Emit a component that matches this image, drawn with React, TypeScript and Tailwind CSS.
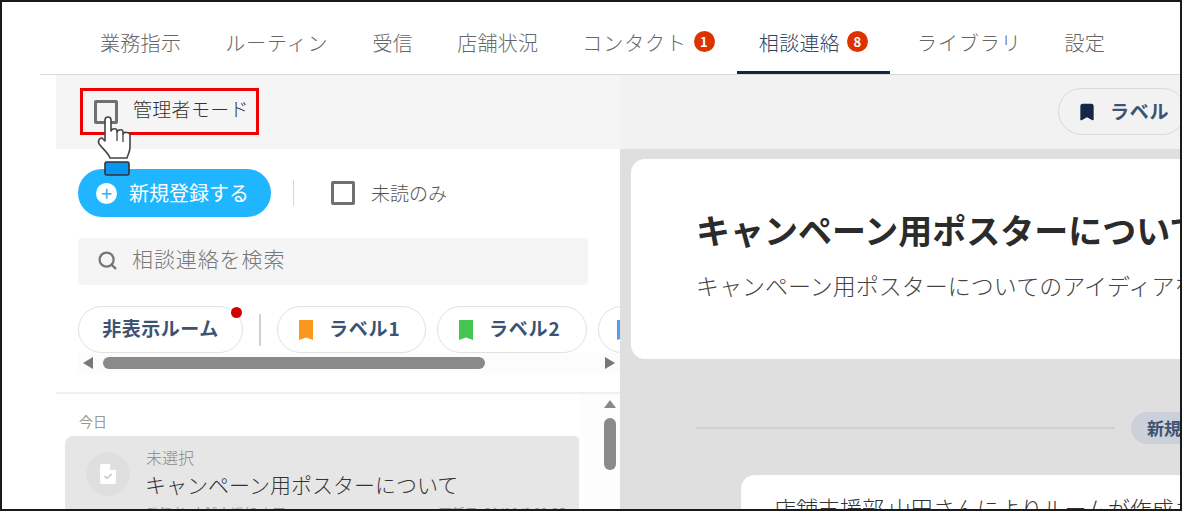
import { Bookmark, Search } from 'lucide-react'

const font = "font-['Noto_Sans_CJK_JP','Noto_Sans',sans-serif]"

function Tab({ label, badge, active, kana }: { label: string; badge?: string; active?: boolean; kana?: boolean }) {
  return (
    <div className={`h-full px-[22px] flex items-center gap-[7px] text-[20px] font-light pt-[12px] ${kana ? 'tracking-[0.9px]' : 'tracking-[0.3px]'} ${active ? 'text-[#2f435f] border-b-[3px] border-[#142746]' : 'text-[#666666] pb-[3px]'}`}>
      <span>{label}</span>
      {badge && (
        <span className="w-[21px] h-[21px] -mt-[2px] rounded-full bg-[#dc3300] text-white text-[13px] font-bold flex items-center justify-center leading-none">
          {badge}
        </span>
      )}
    </div>
  )
}

function LabelChip({ text, color, w }: { text: string; color: string; w: string }) {
  return (
    <div className={`${w} h-[47px] shrink-0 rounded-full border border-[#dde1e8] bg-white flex items-center pl-[21px] gap-[16px] text-[19px] tracking-[0.8px] font-bold text-[#3d5372]`}>
      <svg width="14" height="20" viewBox="0 0 14 20" className="shrink-0">
        <path d="M0 0h14v20l-7-2.5-7 2.5z" fill={color} />
      </svg>
      <span className="whitespace-nowrap pb-[2px]">{text}</span>
    </div>
  )
}

function Hand() {
  return (
    <svg className="absolute left-[92px] top-[113px]" width="44" height="62" viewBox="0 0 44 62">
      <rect x="11" y="47" width="24" height="13" rx="1.5" fill="#0a96f0" stroke="#333" strokeWidth="1.6" />
      <path
        d="M11 5c0-4 6-4 6 0v11c1-3 6-3 6 0v1c1-3 6-3 6 0v2c1-2.5 7-2 7 1v12c0 5-2 7-3 11H16c-1-4-6-8-10-13-3-3-1-7 2-7l3 3z"
        fill="#fff"
        stroke="#444"
        strokeWidth="1.6"
        strokeLinejoin="round"
      />
      <path d="M23 17v9M29 19v8" stroke="#444" strokeWidth="1.3" fill="none" />
    </svg>
  )
}

export default function App() {
  return (
    <div className={`${font} relative w-[1182px] h-[511px] overflow-hidden bg-white border-2 border-[#1a1a1a] flex flex-col`}>
      {/* タブ */}
      <div className="h-[73px] ml-[38px] shrink-0 flex border-b border-[#d9d9d9] pl-[38px] whitespace-nowrap">
        <Tab label="業務指示" />
        <Tab label="ルーティン" kana />
        <Tab label="受信" />
        <Tab label="店舗状況" />
        <Tab label="コンタクト" badge="1" kana />
        <Tab label="相談連絡" badge="8" active />
        <div className="w-[5px]" />
        <Tab label="ライブラリ" kana />
        <div className="-ml-[1px]" />
        <Tab label="設定" />
      </div>

      <div className="flex-1 min-h-0 ml-[54px] flex">
        {/* 左ペイン */}
        <div className="w-[564px] shrink-0 flex flex-col">
          <div className="h-[74px] shrink-0 bg-[#f5f5f5] flex items-start pl-[24px] pt-[13px]">
            <div className="w-[179px] h-[47px] border-[3px] border-[#f00000] flex items-center pl-[11px] gap-[15px]">
              <span className="w-[24px] h-[24px] rounded-[2px] border-[3px] border-[#707070]" />
              <span className="text-[19px] tracking-[0.3px] text-[#333] font-light leading-none pb-[6px] whitespace-nowrap">管理者モード</span>
            </div>
          </div>

          <div className="pl-[22px] pt-[20px] flex items-center">
            <div className="w-[193px] h-[48px] rounded-full bg-[#1fb6ff] text-white flex items-center pl-[18px] gap-[12px] text-[20px] whitespace-nowrap">
              <span className="w-[21px] h-[21px] rounded-full bg-white flex items-center justify-center text-[#1fb6ff] text-[20px] leading-none">+</span>
              新規登録する
            </div>
            <span className="w-px h-[26px] bg-[#d8d8d8] ml-[22px]" />
            <span className="w-[24px] h-[24px] ml-[37px] rounded-[2px] border-[3px] border-[#707070]" />
            <span className="ml-[16px] text-[19px] text-[#555] font-light">未読のみ</span>
          </div>

          <div className="ml-[22px] mt-[21px] w-[510px] h-[47px] rounded-[4px] bg-[#f5f5f5] flex items-center pl-[19px] gap-[14px] text-[21px] tracking-[0.9px] text-[#777] font-light">
            <Search size={21} strokeWidth={2.6} className="text-[#777] -mt-[2px]" />
            <span className="pb-[6px]">相談連絡を検索</span>
          </div>

          <div className="ml-[22px] mt-[21px] h-[47px] flex items-center overflow-hidden">
            <div className="relative w-[165px] h-[47px] shrink-0 rounded-full border border-[#dde1e8] flex items-center justify-center text-[19px] tracking-[0.5px] font-bold text-[#3d5372]">
              <span className="pb-[2px]">非表示ルーム</span>
              <span className="absolute right-[0px] top-[0px] w-[11px] h-[11px] rounded-full bg-[#d40000]" />
            </div>
            <span className="w-[2px] h-[32px] bg-[#cfcfcf] ml-[16px] mr-[16px] shrink-0" />
            <LabelChip text="ラベル1" color="#fb961f" w="w-[149px] mr-[11px]" />
            <LabelChip text="ラベル2" color="#45c552" w="w-[150px] mr-[11px]" />
            <LabelChip text="ラベル3" color="#5a9bf0" w="w-[150px] !pl-[18px]" />
          </div>

          {/* 横スクロールバー */}
          <div className="ml-[22px] w-[542px] h-[20px] bg-[#fcfcfc] flex items-center pl-[5px] gap-[10px]">
            <span className="w-0 h-0 border-y-[6px] border-y-transparent border-r-[10px] border-r-[#777]" />
            <span className="w-[382px] h-[12px] rounded-full bg-[#8a8a8a]" />
            <span className="ml-[110px] w-0 h-0 border-y-[6px] border-y-transparent border-l-[10px] border-l-[#777]" />
          </div>

          <div className="mt-[19px] border-t-2 border-[#f0f0f0] flex-1 min-h-0 flex">
            <div className="w-[523px] shrink-0 pl-[9px] min-w-0">
              <div className="pl-[14px] pt-[18px] text-[14px] leading-[18px] text-[#999]">今日</div>
              <div className="mt-[6px] h-[100px] w-[516px] rounded-t-[8px] bg-[#e6e6e6] flex pl-[21px] pt-[16px] gap-[16px]">
                <span className="w-[44px] h-[44px] shrink-0 rounded-full bg-[#dfdfdf] flex items-center justify-center">
                  <svg width="16" height="20" viewBox="0 0 16 20">
                    <path d="M2 0h8l6 6v12a2 2 0 0 1-2 2H2a2 2 0 0 1-2-2V2a2 2 0 0 1 2-2z" fill="#fff" />
                    <path d="M10 0l6 6h-6z" fill="#dfdfdf" />
                    <path d="M4.5 12l2.5 2.5 4.5-4.5" stroke="#bdbdbd" strokeWidth="1.2" fill="none" />
                  </svg>
                </span>
                <div className="min-w-0 -mt-[4px]">
                  <div className="text-[16px] leading-[18px] text-[#888] font-light">未選択</div>
                  <div className="mt-[5px] text-[21px] leading-[26px] text-[#333] font-light whitespace-nowrap -ml-[1px]">キャンペーン用ポスターについて</div>
                  <div className="mt-[7px] flex w-[420px] justify-between text-[13px] leading-[18px] text-[#999] whitespace-nowrap">
                    <span>登録者: 店舗支援部 山田</span>
                    <span>更新日: 21/10/8 09:35</span>
                  </div>
                </div>
              </div>
            </div>
            {/* 縦スクロールバー */}
            <div className="w-[41px] shrink-0 flex flex-col items-center pl-[21px] pt-[6px] bg-[#fdfdfd]">
              <span className="w-0 h-0 border-x-[6px] border-x-transparent border-b-[8px] border-b-[#888]" />
              <span className="mt-[10px] w-[12px] h-[52px] shrink-0 rounded-full bg-[#8a8a8a]" />
            </div>
          </div>
        </div>

        {/* 右ペイン */}
        <div className="flex-1 min-w-0 flex flex-col overflow-hidden">
          <div className="h-[74px] shrink-0 bg-[#f2f2f2] flex justify-end pt-[13px]">
            <div className="w-[128px] h-[47px] -mr-[6px] shrink-0 rounded-full border border-[#d8d8d8] flex items-center pl-[18px] gap-[13px] text-[19px] tracking-[0.8px] font-bold text-[#3d5372] whitespace-nowrap">
              <Bookmark size={20} fill="#142746" stroke="#142746" className="shrink-0" />
              ラベル
            </div>
          </div>
          <div className="flex-1 min-h-0 bg-[#dfdfdf] pl-[11px] pt-[10px] flex flex-col">
            <div className="h-[200px] shrink-0 rounded-l-[14px] bg-white pl-[65px] pt-[47px] overflow-hidden whitespace-nowrap">
              <div className="text-[34px] leading-[48px] font-bold text-[#2b2b2b]">キャンペーン用ポスターについて</div>
              <div className="mt-[16px] text-[23px] leading-[30px] font-light text-[#444]">キャンペーン用ポスターについてのアイディアを募集します</div>
            </div>
            <div className="mt-[53px] flex items-center pl-[65px] shrink-0 h-[32px] whitespace-nowrap">
              <span className="w-[419px] h-[2px] shrink-0 bg-[#cdd0d6]" />
              <span className="ml-[16px] w-[100px] shrink-0 h-[32px] rounded-l-full bg-[#ccd0d8] pl-[16px] flex items-center text-[17px] font-bold text-[#3d5372]">新規登録</span>
            </div>
            <div className="mt-[31px] ml-[110px] flex-1 rounded-tl-[14px] bg-white pl-[33px] pt-[18px] text-[22px] leading-[28px] font-light text-[#333] whitespace-nowrap overflow-hidden">
              店舗支援部 山田さんによりルームが作成されました
            </div>
          </div>
        </div>
      </div>

      <Hand />
    </div>
  )
}
